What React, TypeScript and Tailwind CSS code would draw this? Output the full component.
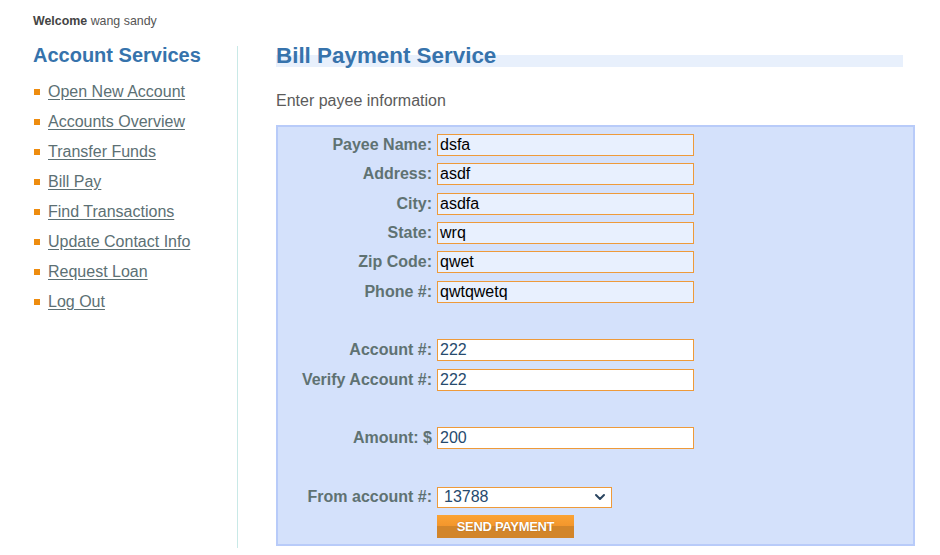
import { ChevronDown } from "lucide-react"

const NAV_LINKS = [
  "Open New Account",
  "Accounts Overview",
  "Transfer Funds",
  "Bill Pay",
  "Find Transactions",
  "Update Contact Info",
  "Request Loan",
  "Log Out",
]

type Row =
  | { kind: "input"; label: string; value: string; filled?: boolean }
  | { kind: "empty" }
  | { kind: "select"; label: string; value: string }
  | { kind: "button" }

const ROWS: Row[] = [
  { kind: "input", label: "Payee Name:", value: "dsfa", filled: true },
  { kind: "input", label: "Address:", value: "asdf", filled: true },
  { kind: "input", label: "City:", value: "asdfa", filled: true },
  { kind: "input", label: "State:", value: "wrq", filled: true },
  { kind: "input", label: "Zip Code:", value: "qwet", filled: true },
  { kind: "input", label: "Phone #:", value: "qwtqwetq", filled: true },
  { kind: "empty" },
  { kind: "input", label: "Account #:", value: "222" },
  { kind: "input", label: "Verify Account #:", value: "222" },
  { kind: "empty" },
  { kind: "input", label: "Amount: $", value: "200" },
  { kind: "empty" },
  { kind: "select", label: "From account #:", value: "13788" },
  { kind: "button" },
]

function FormRow({ row }: { row: Row }) {
  if (row.kind === "empty") return <div className="h-[29.33px]" />

  return (
    <div className="h-[29.33px] flex items-center">
      <div className="w-[159px] pr-[5px] text-right font-bold text-[16px] text-[#5f7272] leading-none">
        {row.kind !== "button" && row.label}
      </div>
      {row.kind === "input" && (
        <div
          className={`w-[257px] h-[22px] border border-[#ee9a3a] flex items-center pl-[2px] text-[16px] ${
            row.filled ? "bg-[#e8f0fe] text-black" : "bg-white text-[#264a6e]"
          }`}
        >
          {row.value}
        </div>
      )}
      {row.kind === "select" && (
        <div className="w-[175px] h-[21px] border border-[#ee9a3a] bg-white flex items-center justify-between pl-[6px] pr-[3px] text-[16px] text-[#264a6e]">
          <span>{row.value}</span>
          <ChevronDown className="w-[16px] h-[16px] text-[#2b4560]" strokeWidth={3} />
        </div>
      )}
      {row.kind === "button" && (
        <div className="w-[137px] h-[23px] flex flex-col relative">
          <div className="flex-1 bg-gradient-to-b from-[#fba334] to-[#f3962c]" />
          <div className="flex-1 bg-[#d2852a]" />
          <span className="absolute inset-0 flex items-center justify-center text-white font-bold text-[13px] tracking-[-0.3px] [text-shadow:0_0_1px_rgba(120,60,0,0.6)]">
            SEND PAYMENT
          </span>
        </div>
      )}
    </div>
  )
}

export default function App() {
  return (
    <div className="w-[940px] h-[555px] bg-white overflow-hidden font-['Liberation_Sans',Arial,sans-serif]">
      <div className="pl-[33px] pt-[14px]">
        <p className="text-[12.4px] text-[#555] leading-[14px]">
          <span className="font-bold text-[#444]">Welcome</span> wang sandy
        </p>

        <div className="flex mt-[18px]">
          {/* sidebar */}
          <aside className="w-[205px] h-[502px] border-r border-[#c9e9e7]">
            <h2 className="text-[20px] font-bold text-[#3673ac] leading-[24px] -mt-[3px]">Account Services</h2>
            <ul className="mt-[10px]">
              {NAV_LINKS.map((link) => (
                <li key={link} className="h-[30px] flex items-center">
                  <span className="w-[6px] h-[6px] bg-[#ee8c0f] ml-[1px] mr-[8px]" />
                  <a href="#" className="text-[16px] text-[#5c7074] underline underline-offset-[2px]">
                    {link}
                  </a>
                </li>
              ))}
            </ul>
          </aside>

          {/* main */}
          <main className="pl-[38px] w-[677px]">
            <div className="relative h-[26px]">
              <div className="absolute left-0 top-[9px] w-[627px] h-[12px] bg-[#e8f0fc]" />
              <h1 className="relative -top-[3px] text-[22.4px] font-bold text-[#3773ac] leading-[26px]">
                Bill Payment Service
              </h1>
            </div>
            <p className="mt-[20px] text-[16px] text-[#5b5b5b] leading-[18px]">Enter payee information</p>

            <div className="mt-[15px] w-[639px] h-[421px] bg-[#d4e1fb] border-2 border-[#b8cbf9] pt-[3.5px]">
              {ROWS.map((row, i) => (
                <FormRow key={i} row={row} />
              ))}
            </div>
          </main>
        </div>
      </div>
    </div>
  )
}
